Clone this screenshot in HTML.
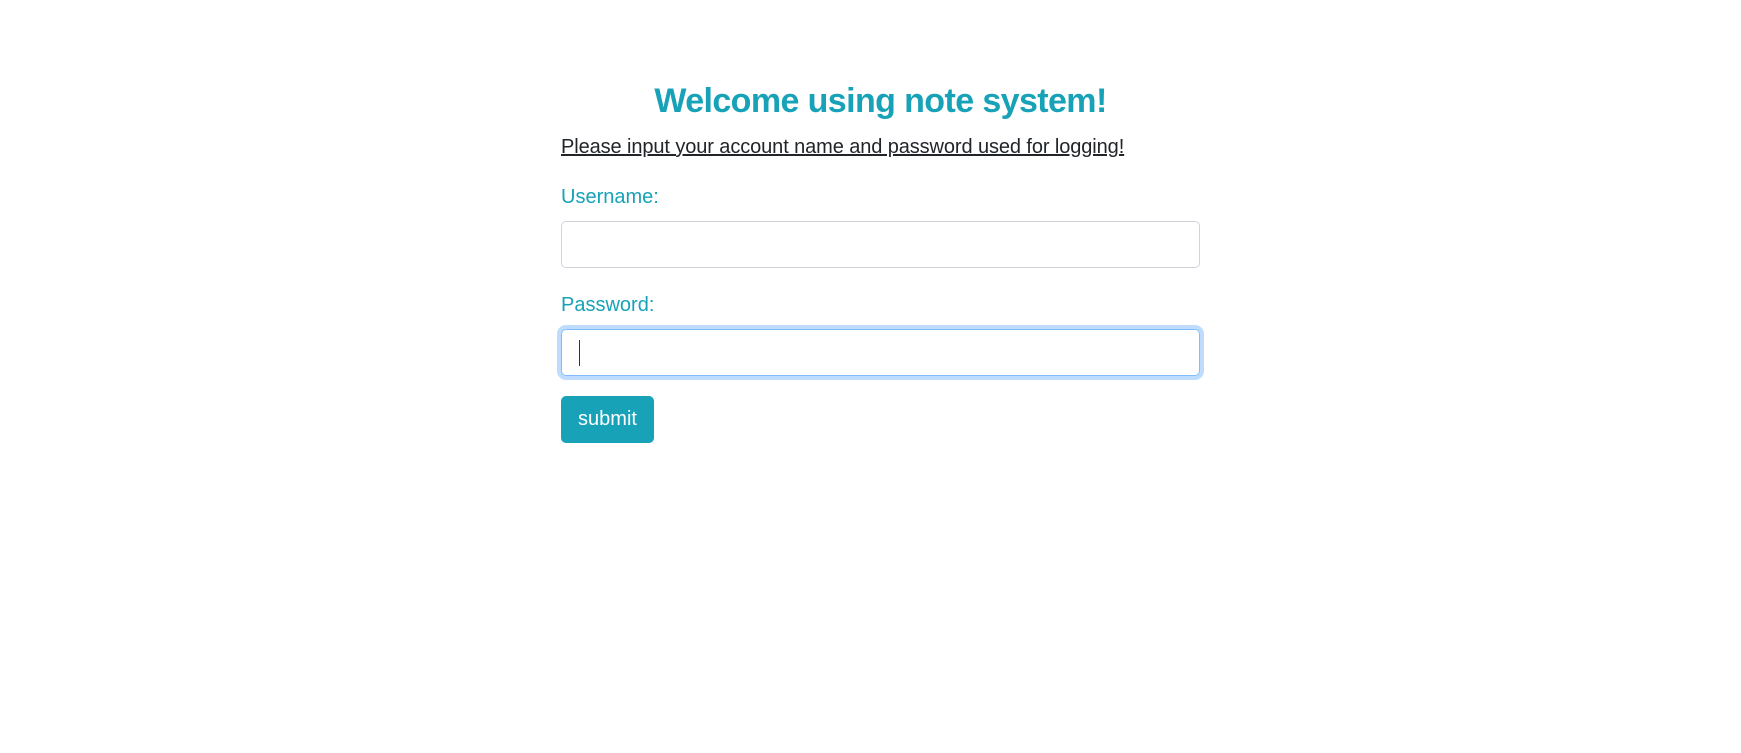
<!DOCTYPE html>
<html><head><style>
body{margin:0;background:#fff;font-family:"Liberation Sans",sans-serif;width:1741px;height:753px;overflow:hidden}
.c{position:absolute;left:561px;width:639px;top:0}
h3{position:absolute;top:79px;left:0;width:100%;text-align:center;margin:0;font-size:34px;font-weight:bold;color:#17a2b8;line-height:44px;letter-spacing:-0.6px}
.p{position:absolute;top:134px;left:0;font-size:20px;color:#212529;text-decoration:underline;line-height:26px;letter-spacing:-0.1px}
.l{position:absolute;left:0;font-size:20px;color:#17a2b8;line-height:26px}
.i{position:absolute;left:0;height:47px;border:1px solid #ced4da;border-radius:5px;box-sizing:border-box;width:639px}
.f{border-color:#80bdff;box-shadow:0 0 0 4px #bfdcff}
.cur{position:absolute;left:17px;top:10px;width:1px;height:26px;background:#333}
.b{position:absolute;left:0;top:396px;width:93px;height:47px;background:#17a2b8;color:#fff;border-radius:5px;font-size:20px;text-align:center;line-height:47px}
</style></head><body><div class="c">
<h3>Welcome using note system!</h3>
<div class="p">Please input your account name and password used for logging!</div>
<div class="l" style="top:184px">Username:</div>
<div class="i" style="top:221px"></div>
<div class="l" style="top:292px">Password:</div>
<div class="i f" style="top:329px"><div class="cur"></div></div>
<div class="b">submit</div>
</div></body></html>
